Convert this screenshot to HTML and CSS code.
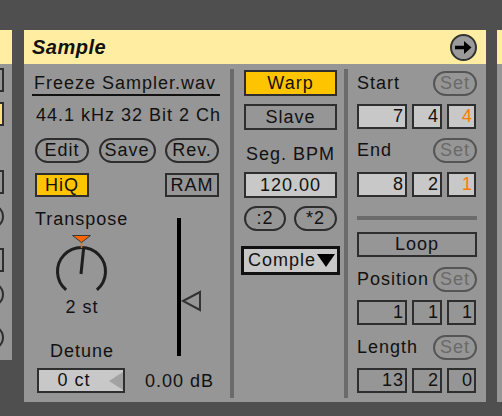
FILE: index.html
```html
<!DOCTYPE html>
<html>
<head>
<meta charset="utf-8">
<link rel="stylesheet" href="styles.css">
</head>
<body>
<div class="rack">
  <div class="dev dev-left">
    <div class="dev-head"></div>
    <div class="dev-body stub">
      <div class="stub-item box s1"></div>
      <div class="stub-item box yel s2"></div>
      <div class="stub-item box s3"></div>
      <div class="stub-item pillstub s4"></div>
      <div class="stub-item box s5"></div>
      <div class="stub-item pillstub s6"></div>
      <div class="stub-item pillstub s7"></div>
    </div>
  </div>

  <div class="dev dev-main">
    <div class="dev-head main-head">
      <span class="title">Sample</span>
      <span class="arrow-btn">
        <svg width="23" height="23" viewBox="0 0 23 23"><path d="M3 9.8 H12 V5 L19.5 11.5 L12 18 V13.2 H3 Z" fill="#000"/></svg>
      </span>
    </div>
    <div class="dev-body main-body">
      <div class="col col1">
        <div class="fname">Freeze Sampler.wav</div>
        <div class="info">44.1 kHz 32 Bit 2 Ch</div>
        <div class="btnrow">
          <div class="pill w54">Edit</div>
          <div class="pill w57">Save</div>
          <div class="pill w54">Rev.</div>
        </div>
        <div class="togrow">
          <div class="tog on">HiQ</div>
          <div class="tog">RAM</div>
        </div>
        <div class="lower">
          <div class="lower-left">
            <div class="transpose">Transpose</div>
            <svg class="knob" width="94" height="64" viewBox="0 0 94 64">
              <path d="M31.1 57.9 A24 24 0 1 1 61.9 57.9" fill="none" stroke="#1e1e1e" stroke-width="3"/>
              <line x1="46.4" y1="9.5" x2="46.6" y2="16" stroke="#ff6a00" stroke-width="1.5"/>
              <line x1="46" y1="42" x2="48.6" y2="16.5" stroke="#1e1e1e" stroke-width="3"/>
              <path d="M37.5 3.5 H55.5 L46.5 10.5 Z" fill="#ff6400" stroke="#3a3a3a" stroke-width="1"/>
            </svg>
            <div class="knobval">2 st</div>
            <div class="detune-label">Detune</div>
            <div class="detune-box"><span class="dval">0 ct</span><span class="dtri"></span></div>
          </div>
          <div class="lower-right">
            <div class="fader">
              <div class="fader-line"></div>
              <svg class="fader-tri" width="22" height="24" viewBox="0 0 22 24"><path d="M2 12 L19 3 L19 21 Z" fill="none" stroke="#333" stroke-width="2" stroke-linejoin="miter"/></svg>
            </div>
            <div class="db">0.00 dB</div>
          </div>
        </div>
      </div>

      <div class="col col2">
        <div class="tbtn warp">Warp</div>
        <div class="tbtn slave">Slave</div>
        <div class="segbpm">Seg. BPM</div>
        <div class="tbtn bpm">120.00</div>
        <div class="halfrow">
          <div class="pill w42">:2</div>
          <div class="pill w43">*2</div>
        </div>
        <div class="mode"><span>Comple</span><span class="mtri"></span></div>
      </div>

      <div class="col col3">
        <div class="hdrrow r1"><span>Start</span><span class="set">Set</span></div>
        <div class="numrow m8">
          <div class="num lite n1">7</div>
          <div class="num lite n2">4</div>
          <div class="num lite n3 orange">4</div>
        </div>
        <div class="hdrrow r2"><span>End</span><span class="set">Set</span></div>
        <div class="numrow m9">
          <div class="num lite n1">8</div>
          <div class="num lite n2">2</div>
          <div class="num lite n3 orange">1</div>
        </div>
        <div class="sep"></div>
        <div class="loop">Loop</div>
        <div class="hdrrow r3"><span>Position</span><span class="set">Set</span></div>
        <div class="numrow m8">
          <div class="num n1">1</div>
          <div class="num n2">1</div>
          <div class="num n3">1</div>
        </div>
        <div class="hdrrow r3"><span>Length</span><span class="set">Set</span></div>
        <div class="numrow m8">
          <div class="num n1">13</div>
          <div class="num n2">2</div>
          <div class="num n3">0</div>
        </div>
      </div>
    </div>
  </div>

  <div class="dev dev-right">
    <div class="dev-head"></div>
    <div class="dev-body"></div>
  </div>
</div>
</body>
</html>
```

FILE: styles.css
```css
* { box-sizing: border-box; }
html, body { margin: 0; padding: 0; }
body {
  width: 502px;
  height: 416px;
  overflow: hidden;
  background: #4f4f4f;
  font-family: "Liberation Sans", Arial, sans-serif;
  font-size: 18px;
  letter-spacing: 1px;
  color: #111;
}
.rack { display: flex; padding-top: 30px; align-items: flex-start; }
.dev { display: flex; flex-direction: column; flex: none; }
.dev-head { height: 34px; background: #ffeea2; flex: none; }
.dev-body { background: #969696; flex: 1; }

/* left stub device */
.dev-left { width: 12px; height: 330px; margin-right: 12px; overflow: hidden; }
.stub { display: flex; flex-direction: column; }
.stub-item { margin-left: -40px; width: 44px; flex: none; }
.stub-item.box { height: 24px; border: 2px solid #2e2e2e; }
.stub-item.yel { background: #ffe07a; }
.pillstub { height: 25px; border: 2px solid #2e2e2e; border-radius: 13px; }
.s1 { margin-top: 4px; height: 25px; }
.s2 { margin-top: 10px; }
.s3 { margin-top: 44px; }
.s4 { margin-top: 10px; }
.s5 { margin-top: 19px; }
.s6 { margin-top: 10px; }
.s7 { margin-top: 18px; }

/* right stub device */
.dev-right { width: 20px; height: 372px; margin-left: 11px; }

/* main device */
.dev-main { width: 462px; height: 372px; }
.main-head {
  display: flex;
  align-items: center;
  justify-content: space-between;
  padding: 0 9px 0 8px;
}
.title {
  font-weight: bold;
  font-style: italic;
  font-size: 20px;
  letter-spacing: 0.5px;
  line-height: 34px;
}
.arrow-btn {
  width: 27px;
  height: 27px;
  border: 2px solid #333;
  border-radius: 50%;
  background: #9a9a9a;
  display: flex;
  align-items: center;
  justify-content: center;
}
.arrow-btn svg { display: block; }

.main-body { display: flex; padding: 5px 0 4px 0; }
.col { display: flex; flex-direction: column; align-items: flex-start; }
.col1 { width: 206px; padding-left: 8px; }
.col2 { width: 114px; border-left: 4px solid #6b6b6b; padding-left: 10px; padding-right: 7px; }
.col3 { width: 142px; border-left: 4px solid #6b6b6b; padding-left: 9px; padding-right: 9px; }

/* column 1 */
.fname {
  margin-top: 3px;
  width: 188px;
  height: 24px;
  line-height: 22px;
  padding-left: 2px;
  border-bottom: 2px solid #111;
  white-space: nowrap;
}
.info { margin-top: 8px; line-height: 22px; padding-left: 4px; white-space: nowrap; }
.btnrow {
  margin-top: 12px;
  margin-left: 3px;
  width: 184px;
  display: flex;
  justify-content: space-between;
}
.pill {
  height: 25px;
  border: 2px solid #2e2e2e;
  border-radius: 13px;
  line-height: 21px;
  text-align: center;
}
.w54 { width: 54px; }
.w57 { width: 57px; }
.w42 { width: 42px; }
.w43 { width: 43px; }
.togrow {
  margin-top: 10px;
  margin-left: 3px;
  width: 184px;
  display: flex;
  justify-content: space-between;
}
.tog {
  width: 54px;
  height: 24px;
  border: 2px solid #2e2e2e;
  line-height: 20px;
  text-align: center;
}
.tog.on { background: #ffc400; }
.lower { display: flex; width: 190px; }
.lower-left { width: 94px; margin-left: 3px; display: flex; flex-direction: column; }
.transpose { margin-top: 11px; line-height: 22px; }
.knob { display: block; margin-top: 2px; }
.knobval { line-height: 22px; text-align: center; }
.detune-label { margin-top: 22px; line-height: 22px; text-align: center; }
.detune-box {
  margin-top: 6px;
  margin-left: 2px;
  width: 88px;
  height: 25px;
  border: 2px solid #2e2e2e;
  background: #c8c8c8;
  display: flex;
  align-items: center;
}
.dval { flex: 1; text-align: center; line-height: 21px; }
.dtri {
  width: 0;
  height: 0;
  border-top: 9px solid transparent;
  border-bottom: 9px solid transparent;
  border-right: 14px solid #a2a2a2;
}
.lower-right { flex: 1; display: flex; flex-direction: column; }
.fader { position: relative; margin-top: 21px; margin-left: 48px; width: 26px; height: 138px; }
.fader-line { width: 4px; height: 138px; background: #000; }
.fader-tri { position: absolute; left: 4px; top: 71px; }
.db { margin-top: 14px; margin-left: 16px; line-height: 22px; white-space: nowrap; }

/* column 2 */
.tbtn {
  width: 93px;
  height: 26px;
  border: 2px solid #2e2e2e;
  line-height: 22px;
  text-align: center;
}
.warp { margin-top: 1px; background: #ffc400; }
.slave { margin-top: 8px; }
.segbpm { width: 93px; margin-top: 13px; line-height: 22px; text-align: center; }
.bpm { margin-top: 7px; background: #c8c8c8; }
.halfrow { margin-top: 8px; width: 93px; display: flex; justify-content: space-between; }
.mode {
  margin-top: 15px;
  margin-left: -3px;
  width: 99px;
  height: 29px;
  border: 3px solid #111;
  background: #c8c8c8;
  display: flex;
  align-items: center;
  padding-left: 4px;
  line-height: 23px;
}
.mtri {
  width: 0;
  height: 0;
  border-left: 9px solid transparent;
  border-right: 9px solid transparent;
  border-top: 13px solid #000;
  margin-left: 1px;
}

/* column 3 */
.hdrrow {
  width: 120px;
  display: flex;
  justify-content: space-between;
  align-items: center;
  height: 26px;
  line-height: 26px;
}
.hdrrow.r1 { margin-top: 1px; }
.hdrrow.r2 { margin-top: 9px; height: 25px; line-height: 25px; }
.hdrrow.r3 { margin-top: 9px; }
.set {
  width: 44px;
  height: 25px;
  border: 2px solid #555;
  border-radius: 13px;
  color: #6a6a6a;
  line-height: 21px;
  text-align: center;
}
.numrow { display: flex; }
.numrow.m8 { margin-top: 8px; }
.numrow.m9 { margin-top: 9px; }
.num {
  height: 25px;
  border: 2px solid #2e2e2e;
  line-height: 21px;
  text-align: right;
  padding-right: 1px;
}
.num.lite { background: #c8c8c8; }
.n1 { width: 50px; margin-right: 5px; }
.n2 { width: 30px; margin-right: 5px; }
.n3 { width: 29px; }
.orange { color: #ff7a00; }
.sep { margin-top: 19px; width: 120px; height: 4px; background: #6b6b6b; }
.loop {
  margin-top: 12px;
  width: 120px;
  height: 25px;
  border: 2px solid #2e2e2e;
  line-height: 21px;
  text-align: center;
}
```
